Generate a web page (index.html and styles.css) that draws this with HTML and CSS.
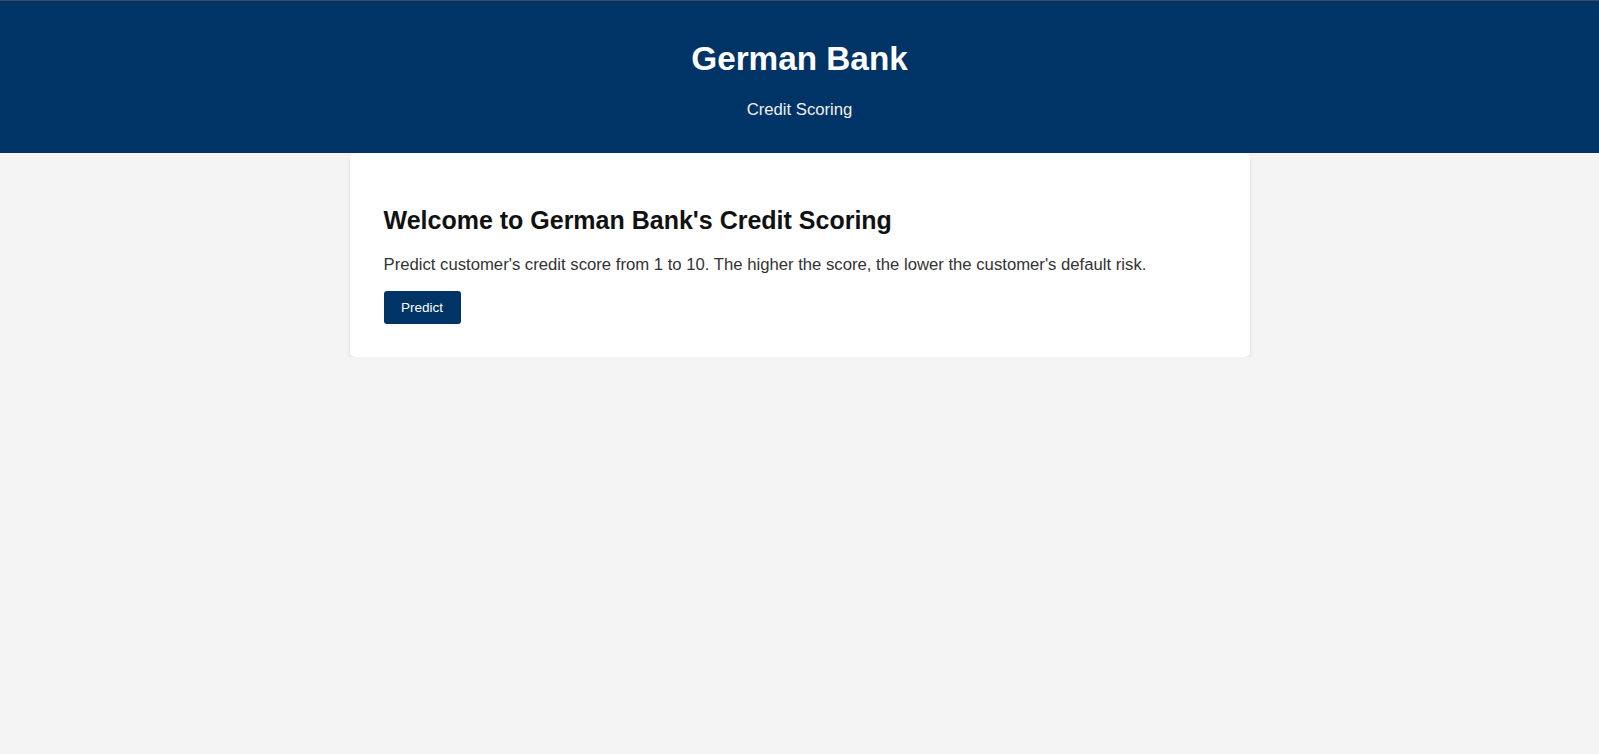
FILE: index.html
```html
<!DOCTYPE html>
<html lang="en">
<head>
<meta charset="utf-8">
<title>German Bank - Credit Scoring</title>
<link rel="stylesheet" href="styles.css">
</head>
<body>
<header class="site-header">
  <h1 class="site-title">German Bank</h1>
  <p class="site-subtitle">Credit Scoring</p>
</header>
<main class="container">
  <section class="card">
    <h2 class="card-title">Welcome to German Bank's Credit Scoring</h2>
    <p class="card-text">Predict customer's credit score from 1 to 10. The higher the score, the lower the customer's default risk.</p>
    <button class="btn" type="button">Predict</button>
  </section>
</main>
</body>
</html>
```

FILE: styles.css
```css
html, body {
  margin: 0;
  padding: 0;
}
body {
  font-family: "Liberation Sans", Arial, sans-serif;
  background: #f4f4f4;
  color: #333;
}
.site-header {
  background: #003366;
  color: #fff;
  text-align: center;
  padding: 20px 20px 17px;
  border-top: 1px solid #3d4c5e;
}
.site-title {
  font-size: 33.3px;
  margin: 18.7px 0 22px;
}
.site-subtitle {
  font-size: 16.7px;
  margin: 0 0 16.7px;
  color: #f0f0f0;
}
.container {
  width: 900px;
  margin: 0 auto;
}
.card {
  background: #fff;
  padding: 32px 34px 33px;
  border-radius: 5px;
  box-shadow: 0 2px 4px rgba(0, 0, 0, 0.1);
}
.card-title {
  font-size: 25px;
  color: #111;
  margin: 20.3px 0 20px;
}
.card-text {
  font-size: 16.7px;
  margin: 0 0 16.8px;
  color: #333;
}
.btn {
  display: block;
  background: #003366;
  color: #fff;
  border: none;
  border-radius: 3px;
  font-family: "Liberation Sans", Arial, sans-serif;
  font-size: 13.5px;
  padding: 0 17.5px;
  height: 33px;
  cursor: pointer;
}
```
